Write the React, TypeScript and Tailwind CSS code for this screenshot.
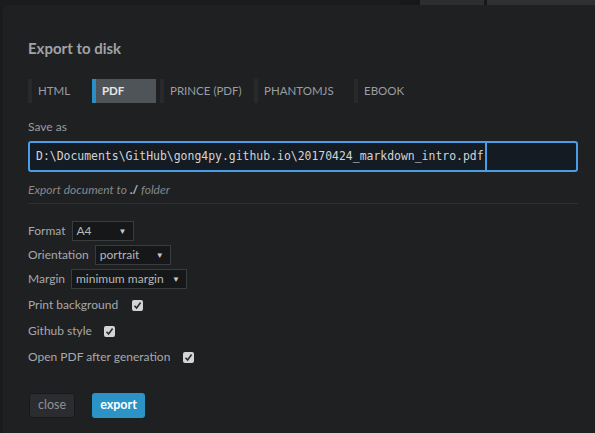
import React from "react";

const tabs = [
  { label: "HTML", width: "w-[60px]" },
  { label: "PDF", width: "w-[64px]", active: true },
  { label: "PRINCE (PDF)", width: "w-[90px]" },
  { label: "PHANTOMJS", width: "w-[96px]" },
  { label: "EBOOK", width: "w-[60px]" },
];

const Select: React.FC<{ value: string; width: string }> = ({ value, width }) => (
  <div
    className={`flex items-center justify-between h-[20px] ${width} border border-[#3a3b3d] bg-[#161718] pl-[4px] pr-[6px] text-[#b4b7ba]`}
  >
    <span>{value}</span>
    <span className="text-[8px] text-[#c8cacc]">▼</span>
  </div>
);

const Check: React.FC = () => (
  <span className="flex items-center justify-center w-[11px] h-[11px] rounded-[2px] bg-[#d4d4d4]">
    <svg width="9" height="9" viewBox="0 0 9 9">
      <path d="M1.5 4.8 L3.6 7 L7.6 1.6" fill="none" stroke="#2a2a2a" strokeWidth="1.6" />
    </svg>
  </span>
);

const App: React.FC = () => {
  return (
    <div
      className="w-[595px] h-[433px] overflow-hidden bg-[#1a1b1d] flex flex-col"
      style={{ fontFamily: "Lato, 'Open Sans', sans-serif" }}
    >
      {/* what is behind the dialog */}
      <div className="flex h-[5px] shrink-0">
        <div className="w-[400px] bg-[#1b1c1e]" />
        <div className="w-[20px] bg-[#17181a]" />
        <div className="w-[64px] bg-[#2d2e30]" />
        <div className="w-[3px] bg-[#17181a]" />
        <div className="flex-1 bg-[#2f3032]" />
      </div>

      <div className="flex flex-1">
        <div className="w-[3px] shrink-0" />
        <div className="flex-1 bg-[#1f2022] rounded-tl-[5px] pl-[25px] pr-[17px] pt-[33px]">
          <h1 className="text-[15px] font-bold text-[#9fa2a6] leading-[20px]">Export to disk</h1>

          <div className="flex gap-[4px] mt-[21px] h-[24px] text-[11.5px]">
            {tabs.map((t) => (
              <div
                key={t.label}
                className={`flex items-center ${t.width} border-l-[4px] pl-[6px] ${
                  t.active
                    ? "border-[#2a8fc6] bg-[#4e5458] font-bold text-[#e6e7e8]"
                    : "border-[#28292b] text-[#9a9da1]"
                }`}
              >
                {t.label}
              </div>
            ))}
          </div>

          <div className="mt-[16px] text-[12px] text-[#9a9da1] leading-[16px]">Save as</div>
          <div className="mt-[6px] flex h-[31px] rounded-[3px] border-2 border-[#4a9ee8] bg-[#151b22]">
            <div
              className="flex items-center pl-[6px] text-[11.45px] text-[#d2d4d6] border-r-2 border-[#4a9ee8] w-[457px]"
              style={{ fontFamily: "'DejaVu Sans Mono', monospace" }}
            >
              D:\Documents\GitHub\gong4py.github.io\20170424_markdown_intro.pdf
            </div>
          </div>

          <div className="mt-[10px] text-[12px] italic text-[#85888c] leading-[16px]">
            Export document to <span className="font-bold not-italic text-[#b8babd]">./</span> folder
          </div>
          <div className="mt-[5px] h-px bg-[#2e3033]" />

          <div className="mt-[17px] flex flex-col gap-[4px] text-[12px] text-[#a6a9ac]">
            <div className="flex items-center gap-[6px]">
              <span>Format</span>
              <Select value="A4" width="w-[62px]" />
            </div>
            <div className="flex items-center gap-[6px]">
              <span>Orientation</span>
              <Select value="portrait" width="w-[76px]" />
            </div>
            <div className="flex items-center gap-[6px]">
              <span>Margin</span>
              <Select value="minimum margin" width="w-[116px]" />
            </div>
            <div className="flex flex-col gap-[8px] mt-[3px]">
              <div className="flex items-center gap-[14px]">
                <span>Print background</span>
                <Check />
              </div>
              <div className="flex items-center gap-[12px]">
                <span>Github style</span>
                <Check />
              </div>
              <div className="flex items-center gap-[13px]">
                <span>Open PDF after generation</span>
                <Check />
              </div>
            </div>
          </div>

          <div className="mt-[27px] flex gap-[17px] pl-[1px] text-[12.5px]">
            <button className="h-[25px] w-[46px] rounded-[3px] bg-[#2a2c2f] border border-[#18191a] text-[#8f9296]">
              close
            </button>
            <button className="h-[25px] w-[53px] rounded-[3px] bg-[#2b93c5] font-bold text-white">
              export
            </button>
          </div>
        </div>
      </div>
    </div>
  );
};

export default App;
